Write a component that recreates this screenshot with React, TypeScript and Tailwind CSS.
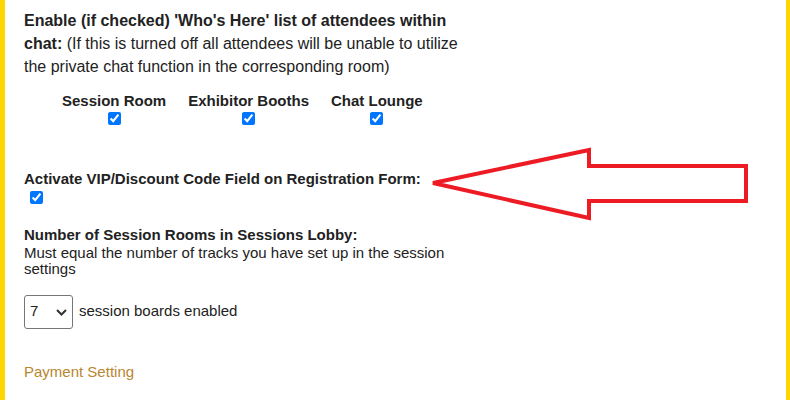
import React, { useState } from "react";

const rooms = ["Session Room", "Exhibitor Booths", "Chat Lounge"];

// red callout arrow drawn over the form, coords relative to the inner box
const Arrow: React.FC = () => (
  <svg
    className="absolute left-0 top-0 pointer-events-none"
    width="781"
    height="400"
    viewBox="0 0 781 400"
  >
    <polygon
      points="428,183 584,150 584,166 741,166 741,201 584,201 584,218"
      fill="none"
      stroke="#ed1c24"
      strokeWidth="4"
    />
  </svg>
);

const App: React.FC = () => {
  const [whoHere, setWhoHere] = useState([true, true, true]);
  const [vip, setVip] = useState(true);
  const [boards, setBoards] = useState("7");

  const toggleRoom = (i: number) => {
    setWhoHere(whoHere.map((v, idx) => (idx === i ? !v : v)));
  };

  return (
    <div
      className="relative w-[790px] h-[400px] overflow-hidden bg-white border-l-[5px] border-r-[4px] border-[#ffd700] text-[#222]"
      style={{ fontFamily: "'Liberation Sans', Arial, sans-serif" }}
    >
      <div className="pl-[19px] pt-[9px] w-[470px]">
        <p className="text-[16px] leading-[23px]">
          <b>Enable (if checked) 'Who's Here' list of attendees within chat:</b>{" "}
          (If this is turned off all attendees will be unable to utilize the private chat
          function in the corresponding room)
        </p>

        <div className="flex ml-[38px] mt-[14px] gap-[22px]">
          {rooms.map((room, i) => (
            <label key={room} className="flex flex-col items-center">
              <span className="text-[15px] leading-[17px] font-bold">{room}</span>
              <input
                type="checkbox"
                checked={whoHere[i]}
                onChange={() => toggleRoom(i)}
                className="w-[13px] h-[13px] mt-[3px]"
              />
            </label>
          ))}
        </div>

        <div className="mt-[45px]">
          <div className="text-[15px] leading-[17px] font-bold">
            Activate VIP/Discount Code Field on Registration Form:
          </div>
          <input
            type="checkbox"
            checked={vip}
            onChange={() => setVip(!vip)}
            className="w-[13px] h-[13px] ml-[6px] mt-[4px] block"
          />
        </div>

        <div className="mt-[23px] text-[15px] leading-[16.5px]">
          <div className="font-bold">Number of Session Rooms in Sessions Lobby:</div>
          <div className="mt-[1px]">
            Must equal the number of tracks you have set up in the session settings
          </div>
        </div>

        <div className="flex items-center mt-[17px] gap-[6px]">
          <div className="relative w-[49px] h-[34px]">
            <select
              value={boards}
              onChange={(e) => setBoards(e.target.value)}
              className="appearance-none w-full h-full border border-[#767676] rounded-[3px] pl-[5px] text-[15px] bg-white outline-none"
            >
              {["1", "2", "3", "4", "5", "6", "7", "8", "9", "10"].map((n) => (
                <option key={n} value={n}>
                  {n}
                </option>
              ))}
            </select>
            <svg
              className="absolute right-[6px] top-[14px] pointer-events-none"
              width="11"
              height="7"
              viewBox="0 0 11 7"
            >
              <path d="M1 1l4.5 4.5L10 1" fill="none" stroke="#333" strokeWidth="2" />
            </svg>
          </div>
          <span className="text-[15px]">session boards enabled</span>
        </div>

        <div className="mt-[32px] text-[15px] text-[#b8862f]">Payment Setting</div>
      </div>
      <Arrow />
    </div>
  );
};

export default App;
